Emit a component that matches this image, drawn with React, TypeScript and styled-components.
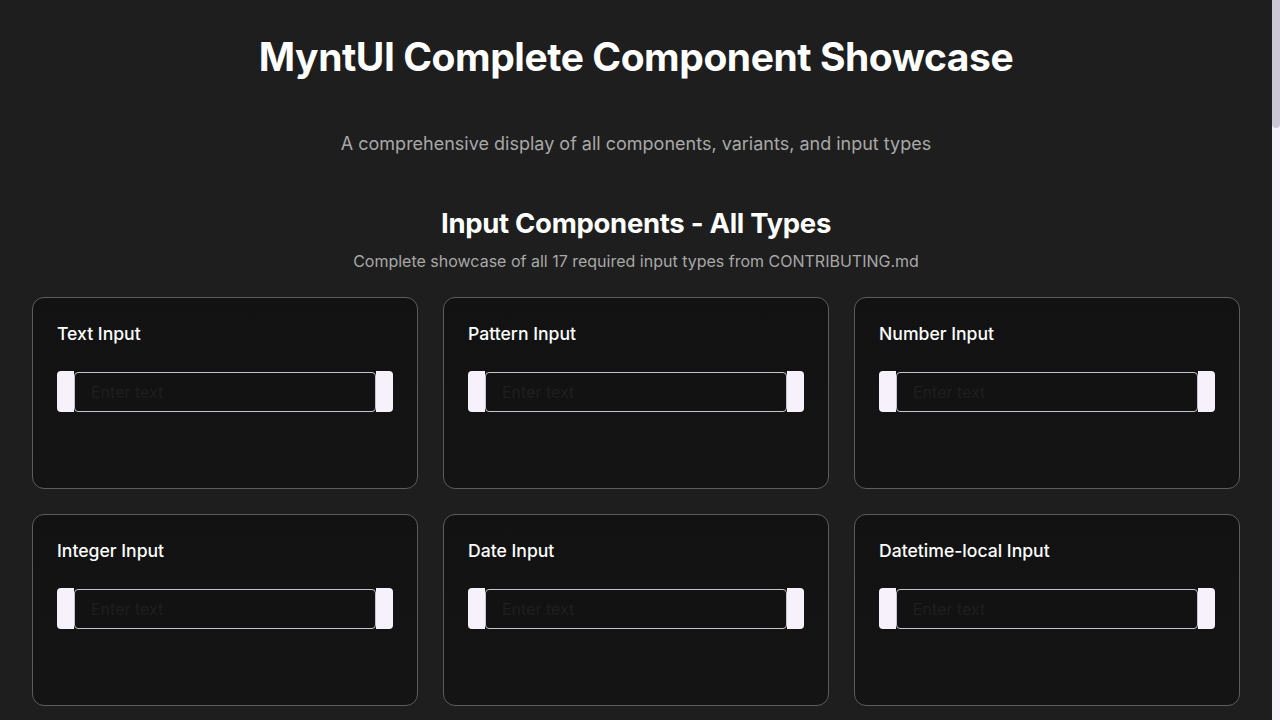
import React from "react";
import styled, { createGlobalStyle } from "styled-components";

const Global = createGlobalStyle`
  html, body { margin: 0; padding: 0; background: #1e1e1e; height: 100%; overflow: hidden; }
  body { font-family: Inter, "Noto Sans", Arial, sans-serif; color: #fff; }
  #root { height: 100%; }
`;

const Frame = styled.div`
  display: flex;
  height: 100vh;
`;

const Scroller = styled.div`
  flex: 1;
  min-width: 0;
  overflow-y: auto;
  background: #1e1e1e;
  scrollbar-width: none;
  &::-webkit-scrollbar { display: none; }
`;

const Rail = styled.div`
  flex: 0 0 8px;
  background: #f6f1fa;
  display: flex;
  flex-direction: column;
`;

const Thumb = styled.div`
  height: 128px;
  background: #cdc6d7;
  border-radius: 0 0 4px 4px;
`;

const Page = styled.main`
  padding: 32px 32px 64px;
  display: flex;
  flex-direction: column;
`;

const Title = styled.h1`
  margin: 1px 0 0;
  text-align: center;
  font-size: 39px;
  line-height: 48px;
  font-weight: 700;
  letter-spacing: -0.45px;
`;

const Lead = styled.p`
  margin: 50px 0 0;
  text-align: center;
  font-size: 18px;
  line-height: 26px;
  color: #a8a8a8;
`;

const Section = styled.section`
  margin-top: 48px;
  display: flex;
  flex-direction: column;
`;

const SectionTitle = styled.h2`
  margin: 0;
  text-align: center;
  font-size: 27.5px;
  line-height: 36px;
  font-weight: 700;
  letter-spacing: -0.3px;
`;

const SectionSub = styled.p`
  margin: 9px 0 25px;
  text-align: center;
  font-size: 16px;
  line-height: 22px;
  color: #a8a8a8;
`;

const Grid = styled.div`
  display: grid;
  grid-template-columns: repeat(3, 1fr);
  gap: 25px 25px;
`;

const Card = styled.div`
  box-sizing: border-box;
  height: 192px;
  padding: 24px;
  border: 1px solid #5c5b5e;
  border-radius: 12px;
  background: linear-gradient(#121212, #141414);
  display: flex;
  flex-direction: column;
`;

const CardTitle = styled.h3`
  margin: 0 0 25px;
  font-size: 17.6px;
  line-height: 24px;
  font-weight: 500;
  color: #fff;
`;

const Group = styled.div`
  display: flex;
  align-items: center;
  height: 41px;
`;

const Addon = styled.span<{ $side: "l" | "r" }>`
  flex: 0 0 17px;
  height: 41px;
  background: #f6f1fa;
  border-radius: ${(p) => (p.$side === "l" ? "4px 0 0 4px" : "0 4px 4px 0")};
`;

const Field = styled.input`
  flex: 1;
  min-width: 0;
  box-sizing: border-box;
  height: 40px;
  margin: 0;
  padding: 0 16px;
  border: 1px solid #c7c3cc;
  border-radius: 4px;
  background: #121212;
  color: #fff;
  font-family: Inter, "Noto Sans", Arial, sans-serif;
  font-size: 16px;
  outline: none;
  &::placeholder { color: #1f1f1f; }
`;

const inputs = [
  "Text", "Pattern", "Number", "Integer", "Date", "Datetime-local",
  "Time", "Email", "Password", "Tel", "URL", "Search",
  "Color", "Range", "File", "Textarea", "Select",
];

const others = [
  { title: "Button Components - All Variants", sub: "Primary, secondary, outline, ghost and destructive buttons", items: ["Primary", "Secondary", "Outline", "Ghost", "Destructive", "Link"] },
  { title: "Card Components", sub: "Cards with headers, content and footers", items: ["Basic Card", "Header Card", "Footer Card", "Media Card", "Stat Card", "Action Card"] },
  { title: "Feedback Components", sub: "Alerts, badges, toasts and progress indicators", items: ["Alert", "Badge", "Toast", "Progress", "Spinner", "Skeleton"] },
];

export default function App() {
  return (
    <>
      <Global />
      <Frame>
        <Scroller>
          <Page>
            <Title>MyntUI Complete Component Showcase</Title>
            <Lead>A comprehensive display of all components, variants, and input types</Lead>
            <Section>
              <SectionTitle>Input Components - All Types</SectionTitle>
              <SectionSub>Complete showcase of all 17 required input types from CONTRIBUTING.md</SectionSub>
              <Grid>
                {inputs.map((n) => (
                  <Card key={n}>
                    <CardTitle>{n} Input</CardTitle>
                    <Group>
                      <Addon $side="l" />
                      <Field placeholder="Enter text" />
                      <Addon $side="r" />
                    </Group>
                  </Card>
                ))}
              </Grid>
            </Section>
            {others.map((s) => (
              <Section key={s.title}>
                <SectionTitle>{s.title}</SectionTitle>
                <SectionSub>{s.sub}</SectionSub>
                <Grid>
                  {s.items.map((i) => (
                    <Card key={i}>
                      <CardTitle>{i}</CardTitle>
                    </Card>
                  ))}
                </Grid>
              </Section>
            ))}
          </Page>
        </Scroller>
        <Rail>
          <Thumb />
        </Rail>
      </Frame>
    </>
  );
}
